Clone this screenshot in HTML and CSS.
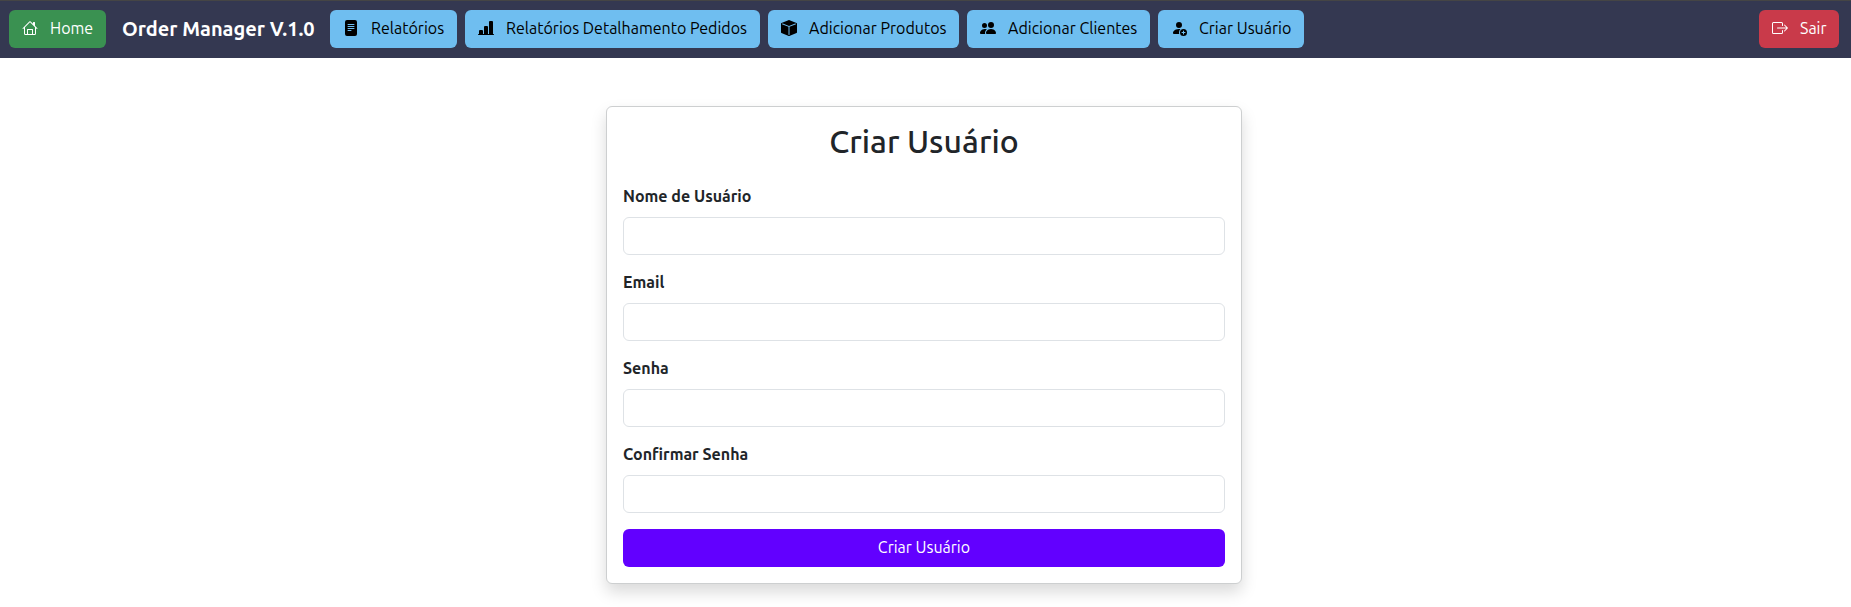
FILE: index.html
```html
<!DOCTYPE html>
<html lang="pt-BR">
<head>
<meta charset="utf-8">
<title>Order Manager</title>
<link rel="stylesheet" href="styles.css">
</head>
<body>
<nav class="navbar">
  <a class="btn btn-home"><svg class="icon" viewBox="0 0 16 16"><path d="M8.707 1.5a1 1 0 0 0-1.414 0L.646 8.146a.5.5 0 0 0 .708.708L2 8.207V13.5A1.5 1.5 0 0 0 3.5 15h9a1.5 1.5 0 0 0 1.5-1.5V8.207l.646.647a.5.5 0 0 0 .708-.708L13 5.793V2.5a.5.5 0 0 0-.5-.5h-1a.5.5 0 0 0-.5.5v1.293zM13 7.207V13.500a.5.5 0 0 1-.5.5H11V9.500a.5.5 0 0 0-.5-.5h-5a.5.5 0 0 0-.5.5V14H3.500a.5.5 0 0 1-.5-.5V7.207l5-5zM6 14v-4h4v4z"/></svg><span class="label">Home</span></a>
  <span class="brand">Order Manager V.1.0</span>
  <div class="links">
    <a class="btn btn-link w-rel"><svg class="icon" viewBox="0 0 16 16"><path fill-rule="evenodd" d="M4 0h8a2 2 0 0 1 2 2v12a2 2 0 0 1-2 2H4a2 2 0 0 1-2-2V2a2 2 0 0 1 2-2m1 4a.5.5 0 0 0 0 1h6a.5.5 0 0 0 0-1zm-.5 2.500A.5.5 0 0 0 5 7h6a.5.5 0 0 0 0-1H5a.5.5 0 0 0-.5.5M5 8a.5.5 0 0 0 0 1h6a.5.5 0 0 0 0-1zm0 2a.5.5 0 0 0 0 1h3a.5.5 0 0 0 0-1z"/></svg><span class="label">Relatórios</span></a>
    <a class="btn btn-link w-det"><svg class="icon" viewBox="0 0 16 16"><path d="M11 2a1 1 0 0 1 1-1h2a1 1 0 0 1 1 1v12h.5a.5.5 0 0 1 0 1H.5a.5.5 0 0 1 0-1H1v-3a1 1 0 0 1 1-1h2a1 1 0 0 1 1 1v3h1V7a1 1 0 0 1 1-1h2a1 1 0 0 1 1 1v7h1z"/></svg><span class="label">Relatórios Detalhamento Pedidos</span></a>
    <a class="btn btn-link w-prod"><svg class="icon" viewBox="0 0 16 16"><path fill-rule="evenodd" d="M15.528 2.973a.75.75 0 0 1 .472.696v8.662a.75.75 0 0 1-.472.696l-7.250 2.900a.75.75 0 0 1-.557 0l-7.250-2.900A.75.75 0 0 1 0 12.331V3.669a.75.75 0 0 1 .471-.696L7.443.184l.004-.001.274-.11a.75.75 0 0 1 .558 0l.274.11.004.001zm-1.374.527L8 5.962 1.846 3.500 1 3.839v.400l6.500 2.600v7.922l.500.200.500-.200V6.839l6.500-2.600v-.400z"/></svg><span class="label">Adicionar Produtos</span></a>
    <a class="btn btn-link w-cli"><svg class="icon" viewBox="0 0 16 16"><path d="M7 14s-1 0-1-1 1-4 5-4 5 3 5 4-1 1-1 1zm4-6a3 3 0 1 0 0-6 3 3 0 0 0 0 6m-5.784 6A2.240 2.240 0 0 1 5 13c0-1.355.680-2.750 1.936-3.720A6.300 6.300 0 0 0 5 9c-4 0-5 3-5 4s1 1 1 1zM4.500 8a2.500 2.500 0 1 0 0-5 2.500 2.500 0 0 0 0 5"/></svg><span class="label">Adicionar Clientes</span></a>
    <a class="btn btn-link w-usr"><svg class="icon" viewBox="0 0 16 16"><path d="M12.500 16a3.500 3.500 0 1 0 0-7 3.500 3.500 0 0 0 0 7m.5-5v1h1a.5.5 0 0 1 0 1h-1v1a.5.5 0 0 1-1 0v-1h-1a.5.5 0 0 1 0-1h1v-1a.5.5 0 0 1 1 0m-2-6a3 3 0 1 1-6 0 3 3 0 0 1 6 0"/><path d="M2 13c0 1 1 1 1 1h5.256A4.500 4.500 0 0 1 8 12.500a4.500 4.500 0 0 1 1.544-3.393Q8.844 9.002 8 9c-5 0-6 3-6 4"/></svg><span class="label">Criar Usuário</span></a>
  </div>
  <a class="btn btn-exit"><svg class="icon" viewBox="0 0 16 16"><path d="M10 12.500a.5.5 0 0 1-.5.5h-8a.5.5 0 0 1-.5-.5v-9a.5.5 0 0 1 .5-.5h8a.5.5 0 0 1 .5.5v2a.5.5 0 0 0 1 0v-2A1.500 1.500 0 0 0 9.500 2h-8A1.500 1.500 0 0 0 0 3.500v9A1.500 1.500 0 0 0 1.500 14h8a1.500 1.500 0 0 0 1.500-1.500v-2a.5.5 0 0 0-1 0z"/><path d="M15.854 8.354a.5.5 0 0 0 0-.708l-3-3a.5.5 0 0 0-.708.708L14.293 7.500H5.500a.5.5 0 0 0 0 1h8.793l-2.147 2.146a.5.5 0 0 0 .708.708z"/></svg><span class="label">Sair</span></a>
</nav>
<main class="page">
  <form class="card">
    <h2 class="title">Criar Usuário</h2>
    <label class="field"><span>Nome de Usuário</span><input type="text"></label>
    <label class="field"><span>Email</span><input type="email"></label>
    <label class="field"><span>Senha</span><input type="password"></label>
    <label class="field"><span>Confirmar Senha</span><input type="password"></label>
    <button class="submit" type="button">Criar Usuário</button>
  </form>
</main>
</body>
</html>
```
FILE: styles.css
```css
* { box-sizing: border-box; }
body {
  margin: 0;
  height: 607px;
  overflow: hidden;
  background: #fff;
  color: #212529;
  font: 400 16px/24px Ubuntu, "Noto Sans", sans-serif;
}
.navbar {
  display: flex;
  align-items: center;
  height: 58px;
  padding: 0 12px 1px 9px;
  border-top: 1px solid #454545;
  background: #343851;
}
.btn {
  display: flex;
  align-items: center;
  flex: none;
  height: 38px;
  padding: 0 0 2px 13px;
  border-radius: 6px;
  white-space: nowrap;
}
.icon { width: 16px; height: 16px; margin-right: 12px; fill: currentColor; flex: none; }
.btn-home { width: 97px; background: #3a9151; color: #fff; }
.btn-exit { width: 80px; margin-left: auto; background: #c93a4a; color: #fff; }
.brand {
  width: 192px;
  margin: 0 15px 0 16px;
  color: #fff;
  font-size: 20px;
  font-weight: 600;
  white-space: nowrap;
}
.links { display: flex; gap: 8px; margin-left: 1px; }
.btn-link { background: #6fbef0; color: #000; }
.w-rel { width: 127px; }
.w-det { width: 295px; }
.w-prod { width: 191px; }
.w-cli { width: 183px; }
.w-usr { width: 146px; }
.page { display: flex; justify-content: center; padding: 48px 3px 0 0; }
.card {
  display: flex;
  flex-direction: column;
  width: 636px;
  height: 478px;
  padding: 15px 16px 16px;
  border: 1px solid #cdcfd0;
  border-radius: 6px;
  background: #fff;
  box-shadow: 0 8px 16px rgba(0, 0, 0, 0.15);
}
.title { margin: 0 0 24px; font-size: 32px; line-height: 38px; font-weight: 500; text-align: center; }
.field { display: flex; flex-direction: column; gap: 9px; height: 86px; font-weight: 600; }
.field input { width: 100%; height: 38px; border: 1px solid #dee2e6; border-radius: 6px; background: #fff; }
.submit {
  height: 38px;
  margin-top: 1px;
  padding: 0 0 2px;
  border: 0;
  border-radius: 6px;
  background: #6200ff;
  color: #fff;
  font: inherit;
}
```
